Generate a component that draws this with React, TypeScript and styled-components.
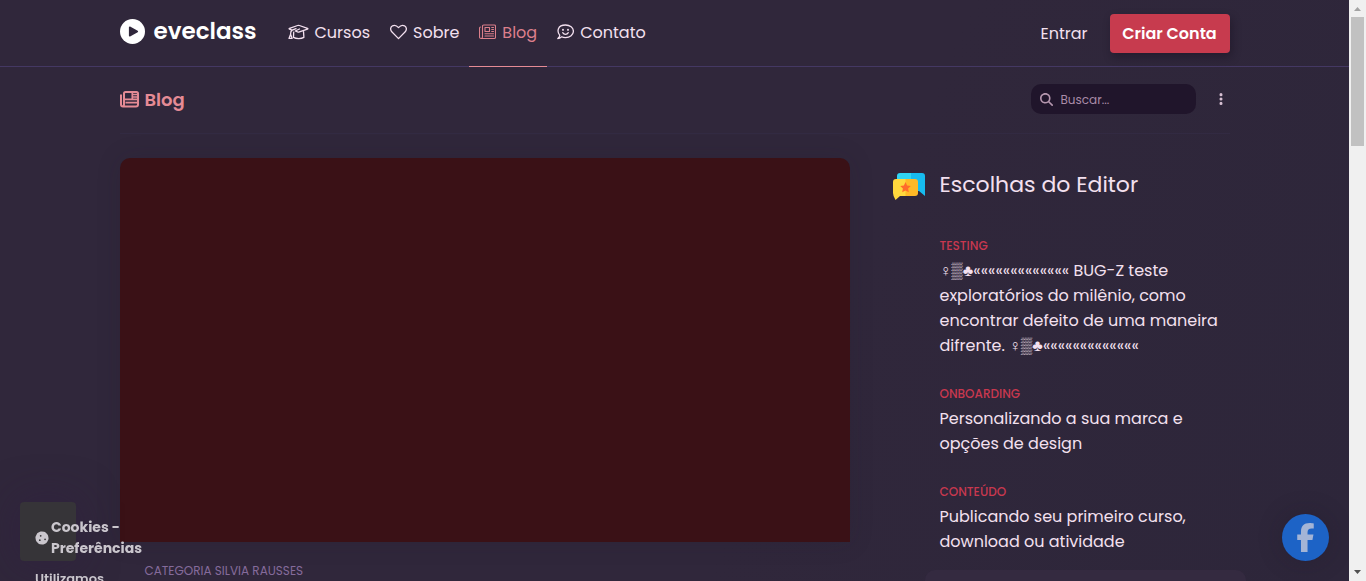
import React from "react";
import styled, { createGlobalStyle } from "styled-components";
import { FaMagnifyingGlass, FaEllipsisVertical, FaCookie, FaFacebookF } from "react-icons/fa6";

const GlobalStyle = createGlobalStyle`
  * { box-sizing: border-box; }
  html, body { margin: 0; height: 100%; overflow: hidden; }
  body {
    background: #30273b;
    color: #f3e0ef;
    font-family: Poppins, Inter, "DejaVu Sans", sans-serif;
    font-size: 16px;
    line-height: 25px;
  }
  a { color: inherit; text-decoration: none; }
  h1, h2, h3, p, ul { margin: 0; padding: 0; }
  svg { display: block; flex-shrink: 0; }
`;

const Page = styled.div`
  height: 100vh;
  overflow: hidden;
  margin-right: 17px;
  background: linear-gradient(115deg, #30273b 60%, #2d263a 100%);
`;

const Container = styled.div`
  max-width: 1110px;
  margin: 0 auto;
`;

const Header = styled.header`
  border-bottom: 1px solid #443863;
`;

const HeaderRow = styled(Container)`
  display: flex;
  height: 66px;
`;

const Brand = styled.a`
  display: flex;
  align-items: center;
  gap: 9px;
  margin-right: 20px;
  width: 138px;
  padding-bottom: 4px;
  color: #fff;
  font-size: 23px;
  font-weight: 600;
`;

const Nav = styled.nav`
  display: flex;
  flex: 1;
`;

const NavLink = styled.a<{ $active?: boolean }>`
  display: flex;
  align-items: center;
  gap: 6px;
  padding: 0 10px 2px;
  margin-bottom: -1px;
  border-bottom: 1px solid ${(p) => (p.$active ? "#e58b95" : "transparent")};
  color: ${(p) => (p.$active ? "#dc7f8b" : "#f3e0ef")};
`;

const Account = styled.div`
  display: flex;
  align-items: center;
  gap: 22px;
`;

const SignUp = styled.button`
  width: 120px;
  height: 39px;
  padding: 0;
  border: 0;
  border-radius: 4px;
  background: #c73b4e;
  box-shadow: 2px 4px 8px rgba(20, 12, 28, 0.4);
  color: #fff;
  font: inherit;
  font-weight: 600;
`;

const Toolbar = styled(Container)`
  display: flex;
  align-items: center;
  height: 67px;
  padding-bottom: 2px;
  border-bottom: 1px solid #322a42;
`;

const PageTitle = styled.h1`
  display: flex;
  align-items: center;
  flex: 1;
  gap: 6px;
  color: #e58b95;
  font-size: 18px;
  font-weight: 600;
`;

const SearchBox = styled.label`
  display: flex;
  align-items: center;
  gap: 8px;
  width: 165px;
  height: 30px;
  padding: 0 9px;
  border-radius: 10px;
  background: #20152b;
  color: #b596ae;
`;

const SearchInput = styled.input`
  flex: 1;
  min-width: 0;
  padding: 0;
  border: 0;
  outline: 0;
  background: none;
  color: inherit;
  font: inherit;
  font-size: 12px;
  &::placeholder { color: #a98ba8; opacity: 1; }
`;

const MenuButton = styled.button`
  display: flex;
  align-items: center;
  justify-content: center;
  width: 18px;
  height: 30px;
  margin-left: 16px;
  padding: 0;
  border: 0;
  background: none;
  color: #d6bfd2;
`;

const Columns = styled(Container)`
  display: grid;
  grid-template-columns: minmax(0, 730px) minmax(0, 337px);
  justify-content: space-between;
  padding-top: 24px;
`;

const Cover = styled.div`
  height: 384px;
  border-radius: 10px 10px 0 0;
  background: #3a1116;
  box-shadow: 0 0 24px rgba(32, 24, 42, 0.15);
`;

const Category = styled.p`
  padding: 20px 25px;
  color: #856b9b;
  font-size: 12px;
  line-height: 18px;
`;

const SideHeading = styled.h2`
  display: flex;
  align-items: center;
  gap: 15px;
  margin-bottom: 33px;
  padding-top: 9px;
  font-size: 22px;
  font-weight: 400;
  line-height: 36px;
`;

const Picks = styled.ul`
  display: flex;
  flex-direction: column;
  gap: 26px;
  padding-left: 47px;
  list-style: none;
`;

const PickTag = styled.p`
  margin-bottom: 2px;
  color: #c8384f;
  font-size: 12px;
  font-weight: 500;
  line-height: 20px;
`;

const Glyphs = styled.span`
  font-family: "Liberation Sans", "DejaVu Sans", sans-serif;
  line-height: 1;
`;

const NextCard = styled.div`
  height: 60px;
  margin: 16px -16px 0 32px;
  border-radius: 10px;
  background: #342a40;
`;

const CookieNotice = styled.aside`
  position: fixed;
  bottom: 20px;
  left: 20px;
  width: 56px;
  height: 59px;
  padding: 15px;
  border-radius: 4px;
  background: #363438;
  box-shadow: 0 0 40px rgba(48, 28, 68, 0.5);
  color: #cac6cd;
  font-size: 14px;
  line-height: 21px;
`;

const CookieTitle = styled.h3`
  display: flex;
  align-items: center;
  gap: 2px;
  width: 110px;
  margin-bottom: 9px;
  font-size: 14px;
  font-weight: 700;
`;

const CookieText = styled.p`
  font-size: 13px;
  font-weight: 600;
`;

const FacebookButton = styled.a`
  position: fixed;
  right: 37px;
  bottom: 20px;
  display: flex;
  align-items: center;
  justify-content: center;
  width: 47px;
  height: 47px;
  border-radius: 50%;
  background: #1d63c6;
  box-shadow: 0 0 24px rgba(28, 20, 36, 0.25);
  color: #a3b4d6;
`;

const ScrollTrack = styled.div`
  position: fixed;
  top: 0;
  right: 0;
  bottom: 0;
  display: flex;
  flex-direction: column;
  align-items: center;
  justify-content: space-between;
  width: 17px;
  padding: 7px 2px;
  background: #f0f0f0;
`;

const ScrollThumb = styled.div`
  width: 13px;
  height: 129px;
  margin: 6px 0 auto;
  background: #c1c1c1;
`;

const LineIcon = ({ width = 17, viewBox = "0 0 17 16", children }: { width?: number; viewBox?: string; children: React.ReactNode }) => (
  <svg width={width} height="16" viewBox={viewBox} fill="none" stroke="currentColor" strokeWidth="1.3" strokeLinejoin="round" strokeLinecap="round" aria-hidden="true">
    {children}
  </svg>
);

const CapIcon = () => (
  <LineIcon width={21} viewBox="0 0 21 16">
    <path d="M4.200 6.100 1.500 5.100q-.9-.4 0-.8L9.600 1.500q.9-.3 1.800 0l8.100 2.800q.9.400 0 .8l-8.100 2.800q-.9.300-1.800 0L7.200 7l4.300-2M4.200 6.100 8 4.600M4.200 6.100Q2.600 7 2.600 9.800M2.600 10.200 1 14.400h3.100L2.600 10.200M5.700 8.200l-.2 5.200c2.600 1.500 7.800 1.500 10.400 0l-.4-6" />
  </LineIcon>
);

const HeartIcon = () => (
  <LineIcon>
    <path d="M8.500 14.600 2 8C-.2 5.700.5 2.900 2.500 1.800c2-1 4.200-.3 6 1.800 1.800-2.100 4-2.800 6-1.800 2 1.100 2.700 3.900.5 6.200Z" />
  </LineIcon>
);

const NewsIcon = () => (
  <LineIcon>
    <path d="M3.500 3V2.200q0-1.200 1.200-1.200h10.600q1.200 0 1.200 1.200v11.100q0 1.200-1.200 1.200H2q-1.500 0-1.500-1.500V4.200q0-1 1-1.200M3.500 3v10q0 1.500-1.500 1.500M6 3.500h4.500v4H6ZM12.700 3.500h1.800M12.700 5.500h1.800M12.700 7.500h1.800M6 9.700h8.500M6 12h8.500" strokeWidth="1.100" />
  </LineIcon>
);

const SmileIcon = () => (
  <LineIcon>
    <path d="M.8 14.500c1.200-.8 1.900-2.100 2-3.200C-.3 7.500.4 1 8.500 1c4.500 0 7.900 2.800 7.900 6.300s-3.400 6.300-7.900 6.300c-1.500 0-2.700-.2-3.800-.8-1.200 1-2.300 1.700-3.900 1.700ZM5.700 8.700c1.300 2.100 4.300 2.100 5.600 0" />
    <path d="M6 5.700v.2M11 5.700v.2" strokeWidth="1.900" />
  </LineIcon>
);

const BoldNewsIcon = () => (
  <svg width="19" height="17" viewBox="0 0 19 17" fill="none" stroke="currentColor" strokeWidth="2" strokeLinejoin="round" aria-hidden="true">
    <path d="M4 13.500V2.500Q4 1 5.500 1h11Q18 1 18 2.500v11q0 2-2 2H3q-2 0-2-2V3.500M4 13.500q0 2-1.500 2" />
    <path d="M12.300 1v7M5 8.300h13M13 3.500h5M13 6h5M5.500 11.700h11.500" strokeWidth="1.700" />
  </svg>
);

const PlayMark = () => (
  <svg width="25" height="25" viewBox="0 0 25 25" aria-hidden="true">
    <circle cx="12.500" cy="12.500" r="12.500" fill="#fff" />
    <path d="M9.700 8.300v8.400l7.600-4.200Z" fill="#30273b" stroke="#30273b" strokeWidth="1.600" strokeLinejoin="round" />
  </svg>
);

const EditorMark = () => (
  <svg width="32" height="32" viewBox="0 -4 32 32" aria-hidden="true">
    <path d="M7 0h11v17H4V3q0-3 3-3Z" fill="#30d5f3" />
    <path d="M18 0h11q3 0 3 3v20l-6-5h-8Z" fill="#17bcef" />
    <path d="M3 6h10v17H7l-4.500 4Q0 23 0 20V9q0-3 3-3Z" fill="#ffd83d" />
    <path d="M12.500 6H22q3 0 3 3v11q0 3-3 3h-9.500Z" fill="#ffb927" />
    <path d="m12.500 9 1.600 3.400 3.700.5-2.700 2.600.7 3.700-3.300-1.800-3.300 1.800.7-3.700-2.700-2.600 3.700-.5Z" fill="#ff6b2b" />
  </svg>
);

const Arrow = ({ down }: { down?: boolean }) => (
  <svg width="7" height="4" viewBox="0 0 7 4" aria-hidden="true">
    <path d={down ? "M0 0h7L3.500 4Z" : "M0 4h7L3.500 0Z"} fill={down ? "#505050" : "#a3a3a3"} />
  </svg>
);

const Symbols = () => (
  <>
    <Glyphs>♀▒♣</Glyphs>«««««««««««««
  </>
);

export default function App() {
  return (
    <>
      <GlobalStyle />
      <Page>
        <Header>
          <HeaderRow>
            <Brand href="#"><PlayMark />eveclass</Brand>
            <Nav>
              <NavLink href="#cursos"><CapIcon />Cursos</NavLink>
              <NavLink href="#sobre"><HeartIcon />Sobre</NavLink>
              <NavLink href="#blog" $active><NewsIcon />Blog</NavLink>
              <NavLink href="#contato"><SmileIcon />Contato</NavLink>
            </Nav>
            <Account>
              <a href="#entrar">Entrar</a>
              <SignUp type="button">Criar Conta</SignUp>
            </Account>
          </HeaderRow>
        </Header>
        <Toolbar>
          <PageTitle><BoldNewsIcon />Blog</PageTitle>
          <SearchBox>
            <FaMagnifyingGlass size={13} />
            <SearchInput type="search" placeholder="Buscar..." aria-label="Buscar" />
          </SearchBox>
          <MenuButton type="button" aria-label="Mais opções"><FaEllipsisVertical size={14} /></MenuButton>
        </Toolbar>
        <Columns>
          <article>
            <Cover />
            <Category>CATEGORIA SILVIA RAUSSES</Category>
          </article>
          <aside>
            <SideHeading><EditorMark />Escolhas do Editor</SideHeading>
            <Picks>
              <li>
                <PickTag>TESTING</PickTag>
                <a href="#testing"><Symbols /> BUG-Z teste exploratórios do milênio, como encontrar defeito de uma maneira difrente. <Symbols /></a>
              </li>
              <li>
                <PickTag>ONBOARDING</PickTag>
                <a href="#onboarding">Personalizando a sua marca e opções de design</a>
              </li>
              <li>
                <PickTag>CONTEÚDO</PickTag>
                <a href="#conteudo">Publicando seu primeiro curso, download ou atividade</a>
              </li>
            </Picks>
            <NextCard />
          </aside>
        </Columns>
      </Page>
      <CookieNotice>
        <CookieTitle><FaCookie size={14} />Cookies - Preferências</CookieTitle>
        <CookieText>Utilizamos</CookieText>
      </CookieNotice>
      <FacebookButton href="#facebook" aria-label="Facebook"><FaFacebookF size={29} /></FacebookButton>
      <ScrollTrack aria-hidden="true">
        <Arrow />
        <ScrollThumb />
        <Arrow down />
      </ScrollTrack>
    </>
  );
}
